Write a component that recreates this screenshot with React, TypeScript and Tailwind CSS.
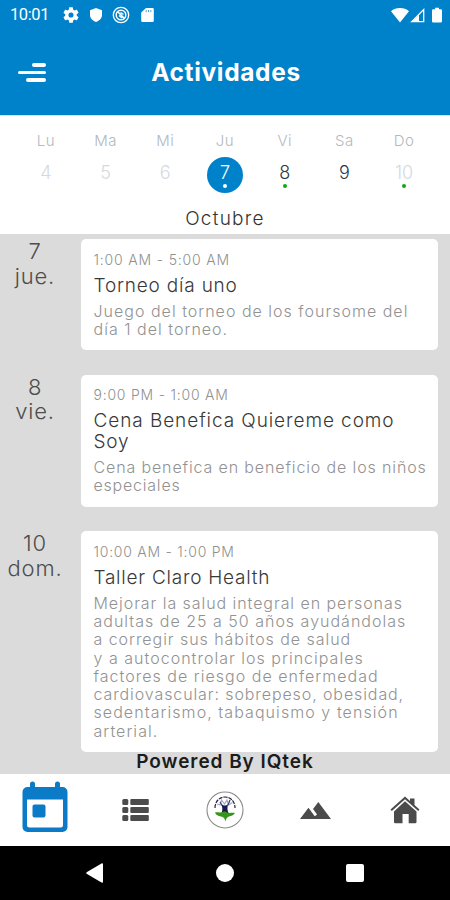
import clsx from 'clsx'

type Line = {
    text: string
    className: string
}

type Activity = {
    day: string
    weekday: string
    time: Line
    title: Line[]
    description: Line[]
}

type Day = {
    label: string
    number: string
    state: 'past' | 'selected' | 'enabled'
    dot?: boolean
}

const days: Day[] = [
    { label: 'Lu', number: '4', state: 'past' },
    { label: 'Ma', number: '5', state: 'past' },
    { label: 'Mi', number: '6', state: 'past' },
    { label: 'Ju', number: '7', state: 'selected', dot: true },
    { label: 'Vi', number: '8', state: 'enabled', dot: true },
    { label: 'Sa', number: '9', state: 'enabled' },
    { label: 'Do', number: '10', state: 'past', dot: true },
]

const activities: Activity[] = [
    {
        day: '7',
        weekday: 'jue.',
        time: { text: '1:00 AM - 5:00 AM', className: 'tracking-[0.82px]' },
        title: [{ text: 'Torneo día uno', className: 'tracking-[0.8px]' }],
        description: [
            { text: 'Juego del torneo de los foursome del', className: 'tracking-[1.01px]' },
            { text: 'día 1 del torneo.', className: 'tracking-[1.02px]' },
        ],
    },
    {
        day: '8',
        weekday: 'vie.',
        time: { text: '9:00 PM - 1:00 AM', className: 'tracking-[0.78px]' },
        title: [
            { text: 'Cena Benefica Quiereme como', className: 'tracking-[0.92px]' },
            { text: 'Soy', className: 'tracking-[0.8px]' },
        ],
        description: [
            { text: 'Cena benefica en beneficio de los niños', className: 'tracking-[0.87px]' },
            { text: 'especiales', className: 'tracking-[0.78px]' },
        ],
    },
    {
        day: '10',
        weekday: 'dom.',
        time: { text: '10:00 AM - 1:00 PM', className: 'tracking-[0.75px]' },
        title: [{ text: 'Taller Claro Health', className: 'tracking-[0.75px]' }],
        description: [
            { text: 'Mejorar la salud integral en personas', className: 'tracking-[0.94px]' },
            { text: 'adultas de 25 a 50 años ayudándolas', className: 'tracking-[1px]' },
            { text: 'a corregir sus hábitos de salud', className: 'tracking-[0.95px]' },
            { text: 'y a autocontrolar los principales', className: 'tracking-[1.02px]' },
            { text: 'factores de riesgo de enfermedad', className: 'tracking-[1.02px]' },
            { text: 'cardiovascular: sobrepeso, obesidad,', className: 'tracking-[0.9px]' },
            { text: 'sedentarismo, tabaquismo y tensión', className: 'tracking-[1.07px]' },
            { text: 'arterial.', className: 'tracking-[1.05px]' },
        ],
    },
]

const StatusBar = () => (
    <div className="flex h-[30px] items-center justify-between pl-[10px] pr-2 text-white">
        <div className="flex items-center">
            <span className="w-[53px] font-['Roboto',sans-serif] text-[16.5px] leading-none tracking-[-0.4px]">10:01</span>
            <svg width="16" height="16" viewBox="2 2 20 20" fill="currentColor">
                <path d="M19.14 12.94c.04-.3.06-.61.06-.94 0-.32-.02-.64-.07-.94l2.03-1.58a.49.49 0 0 0 .12-.61l-1.92-3.32a.49.49 0 0 0-.59-.22l-2.39.96c-.5-.38-1.03-.7-1.62-.94l-.36-2.54a.48.48 0 0 0-.48-.41h-3.84c-.24 0-.43.17-.47.41l-.36 2.54c-.59.24-1.13.57-1.62.94l-2.39-.96a.48.48 0 0 0-.59.22L2.74 8.87c-.12.21-.08.47.12.61l2.03 1.58c-.05.3-.09.63-.09.94s.02.64.07.94l-2.03 1.58a.49.49 0 0 0-.12.61l1.92 3.32c.12.22.37.29.59.22l2.39-.96c.5.38 1.03.7 1.62.94l.36 2.54c.05.24.24.41.48.41h3.84c.24 0 .44-.17.47-.41l.36-2.54c.59-.24 1.13-.56 1.62-.94l2.39.96c.22.08.47 0 .59-.22l1.92-3.32a.49.49 0 0 0-.12-.61zM12 15.2a3.2 3.2 0 1 1 0-6.4 3.2 3.2 0 0 1 0 6.4" />
            </svg>
            <svg className="ml-[10px]" width="14" height="16" viewBox="0 0 14 16" fill="currentColor">
                <path d="M7 1 13 3.3V8c0 3.4-2.5 5.6-6 7C3.5 13.6 1 11.4 1 8V3.3z" />
            </svg>
            <svg className="ml-[9px]" width="18" height="18" viewBox="0 0 18 18" fill="none" stroke="currentColor">
                <circle cx="9" cy="9" r="7.7" strokeWidth="1.3" />
                <circle cx="9" cy="9" r="4.8" strokeWidth="1.5" />
                <path d="M5.5 5.5 12.5 12.5M7 9.5l3 2.5M8.5 6.5l3 2" strokeWidth="1.5" />
            </svg>
            <svg className="ml-[11px]" width="13" height="16" viewBox="0 0 13 16" fill="currentColor">
                <path d="M5 1h6.5a1.3 1.3 0 0 1 1.3 1.3v11.4a1.3 1.3 0 0 1-1.3 1.3h-10A1.3 1.3 0 0 1 .2 13.7V5.5z" />
                <path d="M5.2 3v2.2M7.5 3v2.2M9.8 3v2.2" stroke="#0082ca" strokeWidth=".7" />
            </svg>
        </div>
        <div className="flex items-center">
            <svg width="18" height="16" viewBox="0 0 18 16" fill="currentColor">
                <path d="M0 4.3C2.5 2.1 5.5 1 9 1s6.5 1.1 9 3.3L9 15.5z" />
            </svg>
            <svg className="ml-px" width="15" height="16" viewBox="0 0 15 16">
                <path d="M1.7 14.6 13.7 2.6v12z" fill="none" stroke="currentColor" strokeWidth="1.3" />
                <path d="M2 15 9 8v7z" fill="currentColor" />
            </svg>
            <svg className="ml-[7px]" width="10" height="16" viewBox="0 0 10 16" fill="currentColor">
                <path d="M3 .8h4v1.5h1.7A1.3 1.3 0 0 1 10 3.6v10.6a1.3 1.3 0 0 1-1.3 1.3H1.3A1.3 1.3 0 0 1 0 14.2V3.6a1.3 1.3 0 0 1 1.3-1.3H3z" />
            </svg>
        </div>
    </div>
)

const Header = () => (
    <header className="h-[115px] bg-[#0082ca]">
        <StatusBar />
        <div className="flex h-[85px] items-center px-[18px]">
            <button className="flex w-7 flex-col items-end gap-1" aria-label="Menú">
                <span className="h-[3.5px] w-[14px] rounded-full bg-white" />
                <span className="h-[3.5px] w-7 rounded-full bg-white" />
                <span className="h-[3.5px] w-5 rounded-full bg-white" />
            </button>
            <h1 className="flex-1 whitespace-nowrap pr-[26px] text-center text-[24.5px] font-bold leading-none tracking-[0.65px] text-white">
                Actividades
            </h1>
        </div>
    </header>
)

const WeekStrip = () => (
    <section className="h-[119px] border-t border-[#c4ebfc] bg-white px-4">
        <div className="grid grid-cols-7 pt-4">
            {days.map((day) => (
                <div key={day.label} className="flex flex-col items-center">
                    <span className="h-[18px] text-[15px] font-light leading-[18px] tracking-[0.5px] text-[#b3b9c0]">
                        {day.label}
                    </span>
                    <div
                        className={clsx(
                            'mt-[7px] flex size-9 flex-col items-center rounded-full pt-[5px] text-[18px] font-light leading-[21px]',
                            day.state === 'selected' && 'bg-[#0082ca] text-white',
                            day.state === 'enabled' && 'text-[#2d3640]',
                            day.state === 'past' && 'text-[#d5d9de]',
                        )}
                    >
                        {day.number}
                        {day.dot && (
                            <span
                                className={clsx(
                                    'mt-px size-1 rounded-full',
                                    day.state === 'selected' ? 'bg-white' : 'bg-[#10a810]',
                                )}
                            />
                        )}
                    </div>
                </div>
            ))}
        </div>
        <p className="mt-[14px] text-center text-[19px] font-light leading-[23px] tracking-[1.25px] text-[#333]">Octubre</p>
    </section>
)

const TextLines = ({ lines }: { lines: Line[] }) => (
    <>
        {lines.map((line) => (
            <span key={line.text} className={clsx('block whitespace-nowrap', line.className)}>
                {line.text}
            </span>
        ))}
    </>
)

const ActivityRow = ({ day, weekday, time, title, description }: Activity) => (
    <div className="flex">
        <div className="w-[70px] text-center text-[22px] font-light leading-[24.5px] tracking-[0.8px] text-[#4d4d4d]">
            <p>{day}</p>
            <p>{weekday}</p>
        </div>
        <article className="ml-[11px] w-[357px] rounded-[5px] bg-white pb-3 pl-[12.5px] pt-[12.5px]">
            <p className={clsx('whitespace-nowrap text-[14px] font-light leading-4 text-[#909090]', time.className)}>
                {time.text}
            </p>
            <h2 className="mt-[7px] text-[19px] font-light leading-[21px] text-[#383838]">
                <TextLines lines={title} />
            </h2>
            <p className="mt-1.5 text-[16px] font-light leading-[18.3px] text-[#929292]">
                <TextLines lines={description} />
            </p>
        </article>
    </div>
)

const LogoIcon = () => (
    <svg width="38" height="38" viewBox="0 0 38 38">
        <circle cx="19" cy="19" r="18" fill="#fff" stroke="#8a8a8a" strokeWidth="1.1" />
        <path d="M9 17c0-5.500 3.500-11 10-11s10 5.500 10 11" fill="none" stroke="#23233f" strokeWidth="1.2" strokeDasharray="4 1" />
        <path d="M11 13l3 1 1.500-5 3 4 2.500-4 1.500 5 4-2.500" fill="none" stroke="#a3a6c9" strokeWidth="1.2" />
        <path d="M14 11l2.500 4M24 9l-2 5" stroke="#3e4275" strokeWidth="1.3" />
        <path d="M15.500 13.500c2 1.200 4.500 1.200 6.500 0-.8 3-.8 6 .5 8.500h-7c1.300-2.500 1-5.500 0-8.500z" fill="#171a4d" />
        <path d="M9 21.500c3-.5 5 .5 6.500-.3 2-1 4.500-.8 5.500.3 2 .8 4 0 8 .5-1.500 2.500-4 2.800-5.500 3.300-2 .8-3.300 1.700-4 5.200-.8-2.500-1.200-4-3.500-4.700-2.500-.8-6-1-7-4.300z" fill="#35961b" />
    </svg>
)

const BottomNav = () => (
    <nav className="grid h-[72px] grid-cols-5 items-center justify-items-center bg-white text-[#4b4b4b]">
        <svg className="-mt-1.5" width="46" height="52" viewBox="0 0 46 52">
            <path
                fill="#0c7bc7"
                fillRule="evenodd"
                d="M8 3a2.5 2.5 0 0 1 5 0V6h20V3a2.5 2.5 0 0 1 5 0V6h2.5A5 5 0 0 1 45.5 11v35a5 5 0 0 1-5 5h-35a5 5 0 0 1-5-5V11a5 5 0 0 1 5-5H8zM5 18.5V44a2.500 2.500 0 0 0 2.500 2.500h31A2.500 2.500 0 0 0 41 44V18.500z"
            />
            <rect x="10.5" y="23.5" width="13" height="13" rx="2" fill="#0c7bc7" />
        </svg>
        <svg width="27" height="22" viewBox="0 0 27 22" fill="currentColor">
            <rect x=".3" y="0" width="6" height="6" rx="1.5" />
            <rect x=".3" y="8" width="6" height="6" rx="1.5" />
            <rect x=".3" y="16" width="6" height="6" rx="1.5" />
            <rect x="8.3" y="0" width="18.5" height="6" rx="1" />
            <rect x="8.3" y="8" width="18.5" height="6" rx="1" />
            <rect x="8.3" y="16" width="18.5" height="6" rx="1" />
        </svg>
        <LogoIcon />
        <svg width="31" height="17" viewBox="1 6 22 12" fill="currentColor">
            <path d="M14 6l-3.75 5 2.85 3.8-1.6 1.2C9.81 13.75 7 10 7 10l-6 8h22z" />
        </svg>
        <svg width="30" height="28" viewBox="0 0 30 28" fill="currentColor">
            <path d="M15 .5 20 5V2.5h4.5V9l5 4.6-1.3 1.4L15 3.2 1.8 15 .5 13.6z" />
            <path d="M15 5.3 26.5 15.5V26a1.3 1.3 0 0 1-1.3 1.3h-6.5V18h-6.2v9.3H5.3A1.3 1.3 0 0 1 4 26V15.5z" />
        </svg>
    </nav>
)

const SystemNav = () => (
    <div className="flex h-[54px] items-center justify-between bg-black px-[86px]">
        <svg width="17" height="20" viewBox="0 0 17 20" fill="#fff">
            <path d="M15.5.4 1 9a1.2 1.2 0 0 0 0 2l14.5 8.6c.8.4 1.5 0 1.5-.8V1.2c0-.8-.7-1.2-1.5-.8z" />
        </svg>
        <span className="size-[18px] rounded-full bg-white" />
        <span className="size-[18px] rounded-[2px] bg-white" />
    </div>
)

const App = () => {
    return (
        <div className="h-[900px] w-[450px] overflow-hidden bg-white font-['Inter',sans-serif]">
            <Header />
            <WeekStrip />
            <main className="h-[540px] bg-[#dbdbdb] pt-[5px]">
                <div className="flex flex-col gap-[24.5px]">
                    {activities.map((activity) => (
                        <ActivityRow key={activity.day} {...activity} />
                    ))}
                </div>
                <p className="pt-px text-center text-[19px] font-semibold leading-[18px] tracking-[0.95px] text-[#1c1c1c]">
                    Powered By IQtek
                </p>
            </main>
            <BottomNav />
            <SystemNav />
        </div>
    )
}

export default App
